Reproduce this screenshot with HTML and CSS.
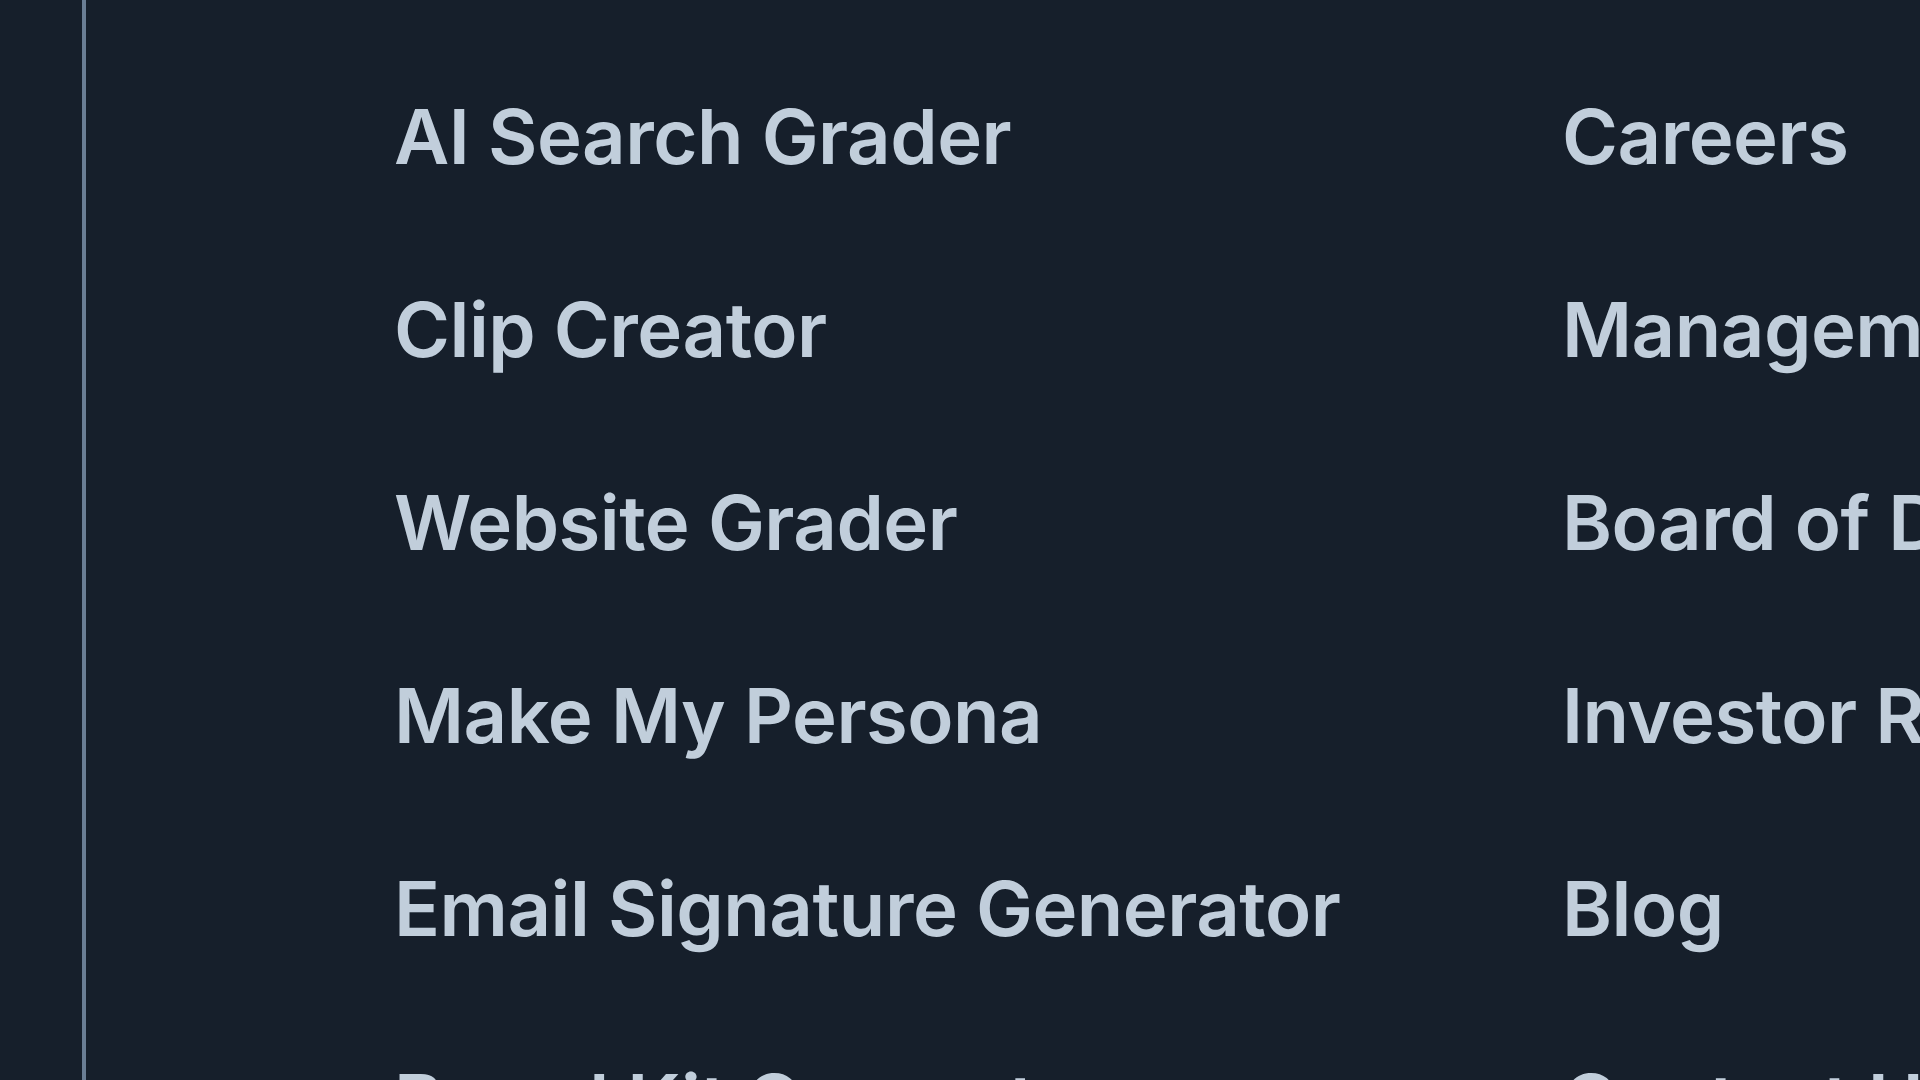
FILE: index.html
```html
<!DOCTYPE html>
<html>
<head>
<meta charset="utf-8">
<link rel="stylesheet" href="styles.css">
</head>
<body>
<div class="page">
  <div class="rail"></div>
  <div class="columns">
    <ul class="col col-tools">
      <li>AI Search Grader</li>
      <li>Clip Creator</li>
      <li>Website Grader</li>
      <li>Make My Persona</li>
      <li>Email Signature Generator</li>
      <li>Brand Kit Generator</li>
    </ul>
    <ul class="col col-company">
      <li>Careers</li>
      <li>Management Team</li>
      <li>Board of Directors</li>
      <li>Investor Relations</li>
      <li>Blog</li>
      <li>Contact Us</li>
    </ul>
  </div>
</div>
</body>
</html>
```
FILE: styles.css
```css
html, body {
  margin: 0;
  padding: 0;
  background: #161f2b;
}
.page {
  width: 1920px;
  height: 1080px;
  overflow: hidden;
  display: flex;
  background: #161f2b;
}
.rail {
  width: 4px;
  margin-left: 82px;
  background: #6a7e94;
  flex: none;
}
.columns {
  display: flex;
  padding-left: 308px;
}
.col {
  list-style: none;
  margin: 0;
  padding: 0;
  font-family: Inter, sans-serif;
  font-weight: 560;
  font-size: 76px;
  letter-spacing: -0.5px;
  color: #c1cedb;
  white-space: nowrap;
}
.col li {
  line-height: 193px;
}
.col-tools {
  width: 1168px;
  flex: none;
  padding-top: 40px;
}
.col-company {
  padding-top: 40px;
}
```
